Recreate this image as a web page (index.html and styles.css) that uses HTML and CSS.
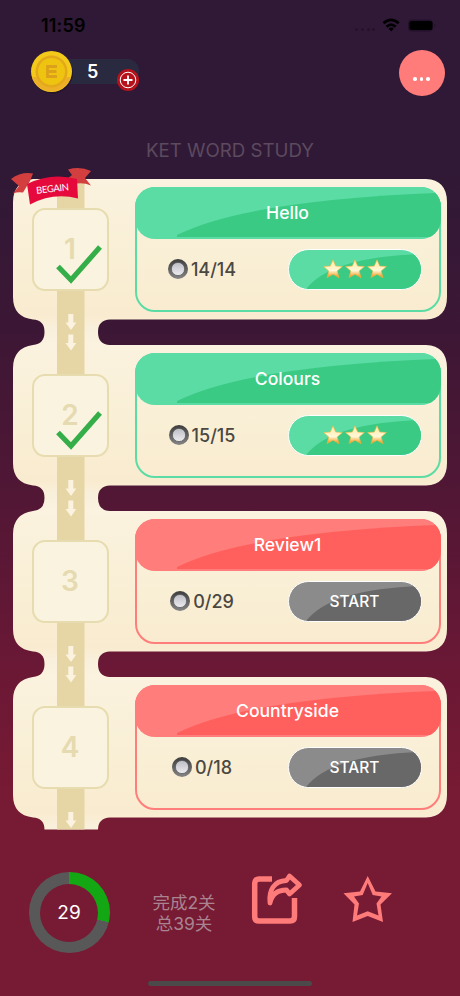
FILE: index.html
```
<!DOCTYPE html>
<html lang="en">
<head>
    <meta charset="UTF-8">
    <title>KET Word Study</title>
    <link rel="stylesheet" href="styles.css">
</head>
<body>
    <svg class="defs" width="0" height="0">
        <defs>
            <linearGradient id="cream" x1="0" y1="0" x2="0" y2="1">
                <stop offset="0" stop-color="#fbf2df"/>
                <stop offset="0.5" stop-color="#f9efd5"/>
                <stop offset="0.82" stop-color="#f9ebcf"/>
                <stop offset="0.9" stop-color="#f9f0dc"/>
                <stop offset="1" stop-color="#fbf2df"/>
            </linearGradient>
            <linearGradient id="gold" x1="0" y1="0" x2="0" y2="1">
                <stop offset="0.15" stop-color="#ffeeb0"/>
                <stop offset="0.6" stop-color="#fff8d6"/>
                <stop offset="1" stop-color="#f08a08"/>
            </linearGradient>
            <linearGradient id="ringDark" x1="0" y1="0" x2="0" y2="1">
                <stop offset="0" stop-color="#3d3d3d"/>
                <stop offset="1" stop-color="#858585"/>
            </linearGradient>
            <linearGradient id="knob" x1="0" y1="0" x2="0" y2="1">
                <stop offset="0" stop-color="#bcbcc4"/>
                <stop offset="1" stop-color="#ececf0"/>
            </linearGradient>
        </defs>
        <symbol id="plate" viewBox="0 0 434 166">
            <path fill="url(#cream)" d="M20 0H413Q434 1 434 23V118Q434 139.500 413 140.500H97Q85 141 85 153Q85 165.500 97 166H20Q31.500 165 31.500 153Q31.500 141 20 140.500Q0 138 0 118V23Q0 3 20 0Z"/>
            <path fill="#e7d6a5" d="M44 0H71.500V166H44Z"/>
        </symbol>
        <symbol id="arrows" viewBox="0 0 12 38">
            <path fill="#fbf2df" d="M3.300 0h5v8.500h3l-5.300 7.500l-5.500-7.500h2.800zM3.300 20.500h5v8.500h3l-5.300 7.500l-5.500-7.500h2.800z"/>
        </symbol>
        <symbol id="radio" viewBox="0 0 20 20">
            <circle cx="10" cy="10" r="10" fill="url(#ringDark)"/>
            <circle cx="10" cy="10" r="6.600" fill="url(#knob)" stroke="#555" stroke-width="0.700"/>
        </symbol>
        <symbol id="star" viewBox="0 0 20 20">
            <path fill="url(#gold)" stroke="#f3b53f" stroke-width="0.600" d="M10 .8l2.700 6.300 6.700.4-5.200 4.400 1.800 6.800L10 15.200l-6 3.500L5.800 12 .6 7.500l6.700-.4z"/>
        </symbol>
        <symbol id="check" viewBox="0 0 46 40">
            <path fill="none" stroke="#35ad49" stroke-width="5.200" d="M2 22.500L15 36L44 3"/>
        </symbol>
    </svg>

    <header>
        <div class="status">
            <span class="time">11:59</span>
            <svg class="signal" width="84" height="16" viewBox="0 0 84 16">
                <g fill="#25122a"><circle cx="4.500" cy="11.500" r="1.500"/><circle cx="10.500" cy="11.500" r="1.500"/><circle cx="16.500" cy="11.500" r="1.500"/><circle cx="21.500" cy="11.500" r="1.500"/></g>
                <g fill="none" stroke="#000" stroke-width="2.800"><path d="M31.500 5.200Q39 -1.500 46.700 5.200"/><path d="M34.500 8.800Q39 4.500 43.700 8.800"/></g>
                <path d="M36.500 10.500Q39.200 8.500 41.800 10.500L39.200 13.500Z"/>
                <rect x="56" y="1.500" width="25" height="12" rx="4" fill="#23102a"/>
                <rect x="57.500" y="3" width="23" height="9" rx="2.500"/>
                <path fill="#23102a" d="M82.500 5.500q2 2 0 4z"/>
            </svg>
        </div>
        <div class="top">
            <div class="coins">
                <svg class="coin" width="44" height="44" viewBox="0 0 44 44">
                    <circle cx="22.500" cy="23" r="20.500" fill="#200f26" opacity="0.600"/>
                    <circle cx="21.500" cy="21.500" r="20.500" fill="#f3ca1a"/>
                    <path fill="#eeaf28" d="M2 27a20.500 20.500 0 0 0 39 0z"/>
                    <circle cx="21.500" cy="21.500" r="16" fill="#e3a91b"/>
                    <circle cx="21.500" cy="21.500" r="13.500" fill="#eec411"/>
                    <path fill="none" stroke="#dca01a" stroke-width="2.800" d="M27 16.500H17.500V26.500H27M17.500 21.500H26.500"/>
                </svg>
                <span class="amount">5</span>
                <svg class="plus" width="22" height="22" viewBox="0 0 22 22">
                    <circle cx="11" cy="11" r="11" fill="#b5121b"/>
                    <circle cx="11" cy="11" r="7.800" fill="none" stroke="#fff" stroke-width="1"/>
                    <path stroke="#fff" stroke-width="1.800" d="M6.500 11h9M11 6.500v9"/>
                </svg>
            </div>
            <button class="more"><i></i><i></i><i></i></button>
        </div>
        <h1>KET WORD STUDY</h1>
    </header>

    <main class="levels">
        <section class="level done">
            <svg class="plate"><use href="#plate"/></svg>
            <svg class="arrows"><use href="#arrows"/></svg>
            <svg class="ribbon" width="82" height="38" viewBox="0 0 82 38">
                <path fill="#d23f3e" d="M0 11Q10 3.500 22 5.500L19 13L12 24.500Q7 23.500 2 25.500L8 18Z"/>
                <path fill="#d23f3e" d="M57 1.500Q69-2 80 3L74 10L80 17.500Q72 14 63 16L56 11L61 7Z"/>
                <path fill="#e60a3c" d="M16 16Q40 4 66 11L67 30.500Q42 24 19 36.500Z"/>
                <text x="25" y="24" textLength="33" transform="rotate(-6 41 20)">BEGAIN</text>
            </svg>
            <div class="number">1<svg class="check"><use href="#check"/></svg></div>
            <div class="card">
                <h2><svg viewBox="0 0 306 52" preserveAspectRatio="none"><path d="M42 50Q110 14 306 6V52H42Z"/></svg><span>Hello</span></h2>
                <div class="info">
                    <p><svg class="radio"><use href="#radio"/></svg>14/14</p>
                    <div class="pill"><svg class="shine" viewBox="0 0 132 39"><path d="M17 39Q42 7 132 4V39Z"/></svg><svg class="star"><use href="#star"/></svg><svg class="star"><use href="#star"/></svg><svg class="star"><use href="#star"/></svg></div>
                </div>
            </div>
        </section>

        <section class="level done">
            <svg class="plate"><use href="#plate"/></svg>
            <svg class="arrows"><use href="#arrows"/></svg>
            <div class="number">2<svg class="check"><use href="#check"/></svg></div>
            <div class="card">
                <h2><svg viewBox="0 0 306 52" preserveAspectRatio="none"><path d="M42 50Q110 14 306 6V52H42Z"/></svg><span>Colours</span></h2>
                <div class="info">
                    <p><svg class="radio"><use href="#radio"/></svg>15/15</p>
                    <div class="pill"><svg class="shine" viewBox="0 0 132 39"><path d="M17 39Q42 7 132 4V39Z"/></svg><svg class="star"><use href="#star"/></svg><svg class="star"><use href="#star"/></svg><svg class="star"><use href="#star"/></svg></div>
                </div>
            </div>
        </section>

        <section class="level">
            <svg class="plate"><use href="#plate"/></svg>
            <svg class="arrows"><use href="#arrows"/></svg>
            <div class="number">3</div>
            <div class="card">
                <h2><svg viewBox="0 0 306 52" preserveAspectRatio="none"><path d="M42 50Q110 14 306 6V52H42Z"/></svg><span>Review1</span></h2>
                <div class="info">
                    <p><svg class="radio"><use href="#radio"/></svg>0/29</p>
                    <div class="pill"><svg class="shine" viewBox="0 0 132 39"><path d="M17 39Q42 7 132 4V39Z"/></svg><span>START</span></div>
                </div>
            </div>
        </section>

        <section class="level">
            <svg class="plate"><use href="#plate"/></svg>
            <svg class="arrows"><use href="#arrows"/></svg>
            <div class="number">4</div>
            <div class="card">
                <h2><svg viewBox="0 0 306 52" preserveAspectRatio="none"><path d="M42 50Q110 14 306 6V52H42Z"/></svg><span>Countryside</span></h2>
                <div class="info">
                    <p><svg class="radio"><use href="#radio"/></svg>0/18</p>
                    <div class="pill"><svg class="shine" viewBox="0 0 132 39"><path d="M17 39Q42 7 132 4V39Z"/></svg><span>START</span></div>
                </div>
            </div>
        </section>
    </main>

    <footer>
        <div class="progress"><span>29</span></div>
        <p class="summary">完成2关<br>总39关</p>
        <svg class="share" width="54" height="54" viewBox="0 0 54 54">
            <path fill="none" stroke="#ff7b7a" stroke-width="5.500" d="M22 7H9Q4.700 7 4.700 11.300V44.500Q4.700 49 9 49H40Q44.500 49 44.500 44.500V26"/>
            <path fill="none" stroke="#ff7b7a" stroke-width="4.800" stroke-linejoin="round" d="M20 31C18.500 18 24 9 36.500 8.500L39.500 4L49.500 13L39.500 22L36.500 18C28 18 22 21.500 20 31Z"/>
        </svg>
        <svg class="favorite" width="52" height="50" viewBox="0 0 52 50">
            <path fill="#ff7b7a" fill-rule="evenodd" d="M25.700 2L33.500 17.500L50 19.300L38.500 30.500L41 48L25.700 42L10.500 48L12.500 30.500L1.500 19.300L18 17.500ZM25.700 9L30.700 21L39.500 22.500L34.500 29.500L36.500 41.500L25.700 37.300L15 41.500L17 29.500L12 22.500L20.700 21Z"/>
        </svg>
    </footer>
    <div class="home-bar"></div>
</body>
</html>
```
FILE: styles.css
```
* {
    box-sizing: border-box;
}
body {
    margin: 0;
    height: 996px;
    overflow: hidden;
    font-family: Inter, "Noto Sans CJK SC", sans-serif;
    background: linear-gradient(#301936 0, #301936 170px, #3c1735 330px, #521735 500px, #6a1835 665px, #771a34 790px, #771a34 100%);
}
.defs {
    position: absolute;
}
h1, h2, p {
    margin: 0;
    font-weight: normal;
}
header {
    height: 178px;
}
.status {
    display: flex;
    justify-content: space-between;
    align-items: center;
    height: 50px;
    padding: 2px 24px 0 41px;
}
.time {
    font-size: 18px;
    font-weight: 600;
    line-height: 22px;
    letter-spacing: 0.2px;
}
.top {
    display: flex;
    justify-content: space-between;
    padding: 0 15.500px 0 31px;
    height: 46px;
}
.coins {
    position: relative;
    display: flex;
    align-items: center;
    width: 108px;
    height: 25px;
    margin-top: 9px;
    border-radius: 0 12px 12px 0;
    background: linear-gradient(90deg, transparent 20px, #292a40 20px);
}
.coin {
    flex: none;
    margin-left: -1px;
    margin-top: 1px;
}
.amount {
    margin-left: 13px;
    font-size: 18px;
    font-weight: 600;
    color: #fff;
}
.plus {
    position: absolute;
    right: 0;
    top: 10px;
}
.more {
    display: flex;
    justify-content: center;
    gap: 3px;
    width: 46px;
    height: 46px;
    padding: 27px 0 0;
    border: none;
    border-radius: 50%;
    background: #ff7c7a;
}
.more i {
    width: 3.500px;
    height: 3.500px;
    border-radius: 50%;
    background: #fff;
}
h1 {
    padding-top: 42px;
    text-align: center;
    font-size: 18.700px;
    line-height: 25px;
    color: #5c4a5e;
}

/* level list */
.levels {
    height: 651.500px;
    padding: 0.500px 13px 0;
    clip-path: inset(-20px 0 0 0);
}
.level {
    --main: #5bdca5;
    --dark: #3bca84;
    position: relative;
    display: flex;
    height: 166px;
}
.level:not(.done) {
    --main: #ff7d7a;
    --dark: #ff605d;
}
.plate {
    position: absolute;
    left: 0;
    top: 0;
    width: 434px;
    height: 166px;
}
.arrows {
    position: absolute;
    left: 52px;
    top: 135.500px;
    width: 12px;
    height: 38px;
    z-index: 1;
}
.ribbon {
    position: absolute;
    left: -2px;
    top: -10.500px;
    z-index: 1;
}
.ribbon text {
    font-family: Lato, sans-serif;
    font-size: 9.500px;
    fill: #fff;
}
.number {
    position: relative;
    width: 77px;
    height: 83px;
    margin: 29px 25.500px 0 19px;
    border: 2px solid #e7dcaf;
    border-radius: 13px;
    background: #faf3df;
    text-align: center;
    font-size: 28px;
    font-weight: 600;
    line-height: 79px;
    text-indent: -1px;
    color: #e5dab0;
}
.check {
    position: absolute;
    left: 22px;
    top: 34px;
    width: 46px;
    height: 40px;
}
.card {
    position: relative;
    width: 306px;
    height: 125px;
    margin-top: 8px;
    border: 2px solid var(--main);
    border-radius: 20px;
}
.card h2 {
    position: relative;
    display: flex;
    justify-content: center;
    align-items: center;
    height: 52px;
    margin: -2px -2px 0;
    border-radius: 20px;
    overflow: hidden;
    background: var(--main);
    font-size: 17.600px;
    font-weight: 500;
    color: #fff;
}
.card h2 svg {
    position: absolute;
    left: 0;
    top: 0;
    width: 306px;
    height: 50px;
    fill: var(--dark);
}
.card h2 span, .pill span {
    position: relative;
}
.info {
    display: flex;
    align-items: center;
    padding: 10px 17px 0 0;
}
.info p {
    display: flex;
    flex: 1;
    justify-content: center;
    align-items: center;
    gap: 3px;
    padding-right: 20px;
    font-size: 18px;
    font-weight: 500;
    color: #4b4742;
}
.radio {
    width: 20px;
    height: 20px;
}
.pill {
    position: relative;
    display: flex;
    justify-content: center;
    align-items: center;
    gap: 2px;
    width: 134px;
    height: 41px;
    border: 1px solid #fff;
    border-radius: 21px;
    overflow: hidden;
    background: #8b8b8b;
    font-size: 15.500px;
    font-weight: 500;
    color: #fff;
}
.done .pill {
    background: var(--main);
}
.shine {
    position: absolute;
    left: 0;
    top: 0;
    width: 132px;
    height: 39px;
    fill: #686868;
}
.done .shine {
    fill: var(--dark);
}
.star {
    position: relative;
    width: 20px;
    height: 20px;
}

footer {
    display: flex;
    align-items: flex-start;
    height: 151.500px;
    padding: 42.500px 0 0 28.500px;
}
.progress {
    display: flex;
    justify-content: center;
    align-items: center;
    width: 81px;
    height: 81px;
    border-radius: 50%;
    background: conic-gradient(#14a714 29%, #585858 29%);
}
.progress span {
    width: 58px;
    height: 58px;
    border-radius: 50%;
    background: #771a34;
    text-align: center;
    font-size: 19px;
    line-height: 58px;
    color: #fff;
}
.summary {
    width: 70px;
    margin: 20px 0 0 39.500px;
    text-align: center;
    font-size: 17.500px;
    line-height: 21px;
    white-space: nowrap;
    color: #a98490;
}
.share {
    margin: 0 0 0 31px;
}
.favorite {
    margin: 2px 0 0 38px;
}
.home-bar {
    width: 164px;
    height: 5px;
    margin: 0 auto;
    border-radius: 3px;
    background: #4b4949;
}
```
